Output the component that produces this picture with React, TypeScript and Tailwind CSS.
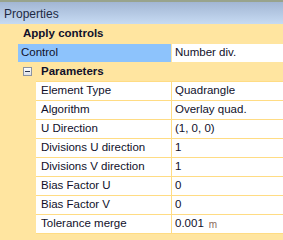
import React from 'react'

const rows: { label: string; value: string; unit?: string }[] = [
  { label: 'Element Type', value: 'Quadrangle' },
  { label: 'Algorithm', value: 'Overlay quad.' },
  { label: 'U Direction', value: '(1, 0, 0)' },
  { label: 'Divisions U direction', value: '1' },
  { label: 'Divisions V direction', value: '1' },
  { label: 'Bias Factor U', value: '0' },
  { label: 'Bias Factor V', value: '0' },
  { label: 'Tolerance merge', value: '0.001', unit: 'm' },
]

const App = () => {
  return (
    <div className="w-[283px] h-[240px] overflow-hidden bg-[#ffe5a0] text-[11.5px] text-[#10102a] font-['Liberation_Sans',Arial,sans-serif]">
      <div className="h-[24px] border-t-2 border-[#98a38c] bg-gradient-to-b from-[#a2b6d3] to-[#c7dbf3] flex items-center pl-[4px] pt-[2px] text-[12px] text-[#1e2a44]">
        Properties
      </div>

      <div className="h-[19px] flex items-center pl-[23px] font-bold">Apply controls</div>

      <div className="h-[19px] flex">
        <div className="ml-[18px] w-[153px] bg-[#8dc3fc] pl-[3px] flex items-center mt-[1px]">Control</div>
        <div className="w-px bg-[#ffe5a0]" />
        <div className="flex-1 bg-white pl-[3px] flex items-center mt-[1px]">Number div.</div>
      </div>

      <div className="h-[19px] flex items-center pl-[23px]">
        <div className="w-[9px] h-[9px] border border-[#8b93a3] bg-gradient-to-b from-white to-[#dde1e8] flex items-center justify-center">
          <div className="w-[5px] h-px bg-[#2a3550]" />
        </div>
        <span className="ml-[9px] font-bold">Parameters</span>
      </div>

      <div className="ml-[36px] border-b border-[#ffdc84]">
        {rows.map((r) => (
          <div key={r.label} className="h-[19px] flex border-t border-[#ffdc84]">
            <div className="w-[135px] bg-white pl-[5px] flex items-center whitespace-nowrap overflow-hidden">{r.label}</div>
            <div className="w-px bg-[#ffdc84]" />
            <div className="flex-1 bg-white pl-[3px] flex items-center">
              {r.value}
              {r.unit && <span className="ml-[5px] text-[10px] text-[#8a6a5c]">{r.unit}</span>}
            </div>
          </div>
        ))}
      </div>
    </div>
  )
}

export default App
